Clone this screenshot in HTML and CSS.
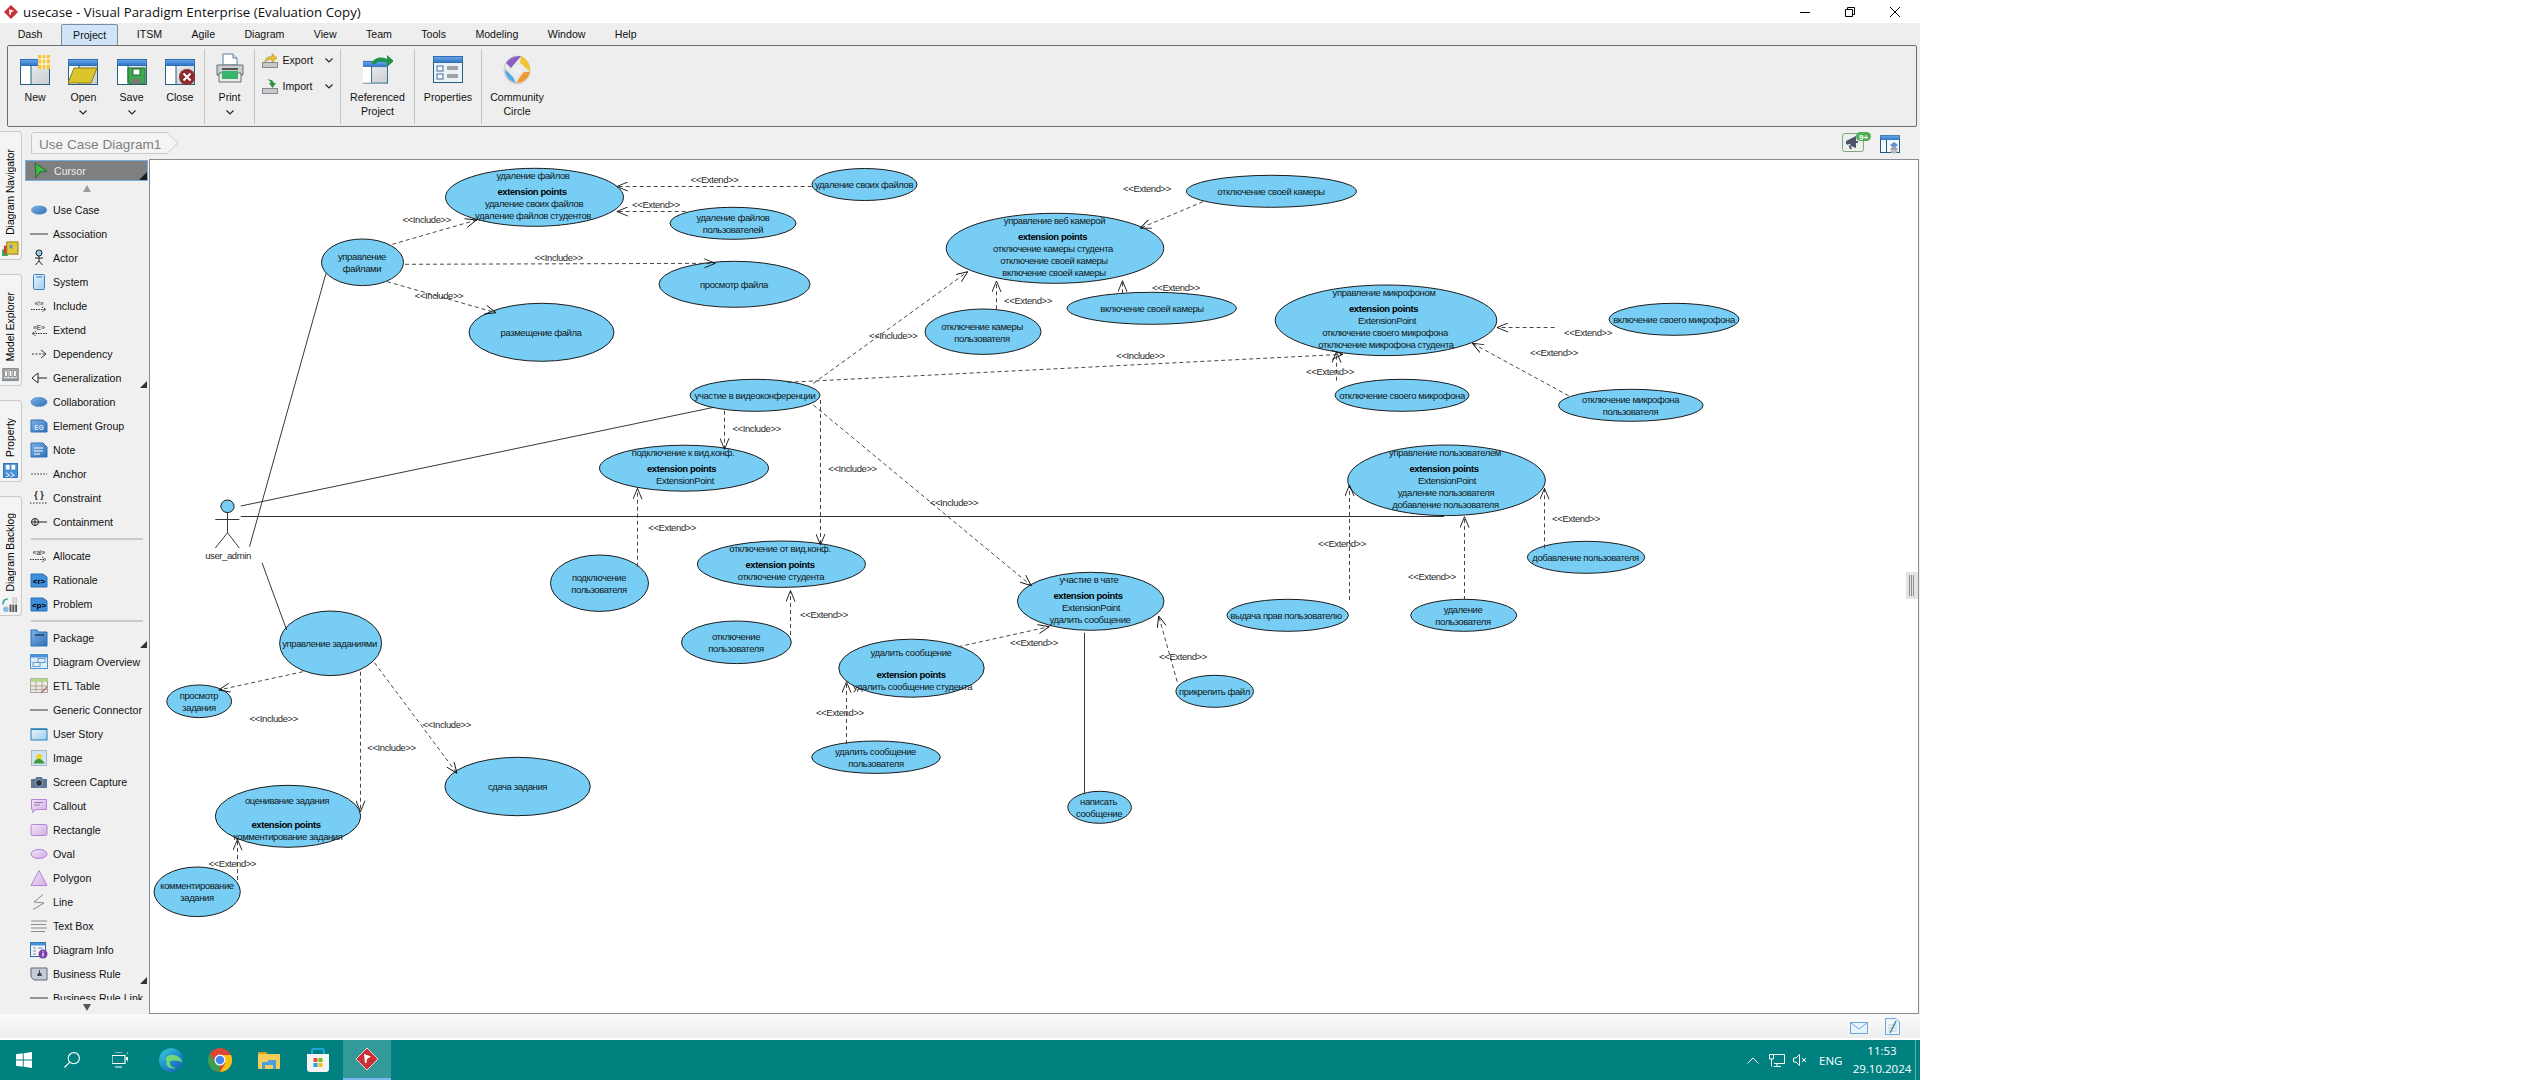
FILE: index.html
```html
<!DOCTYPE html>
<html lang="en">
<head>
<meta charset="utf-8">
<title>usecase - Visual Paradigm Enterprise (Evaluation Copy)</title>
<link rel="stylesheet" href="styles.css">
</head>
<body>
<svg class="defs" width="0" height="0" aria-hidden="true">
  <defs>
    <linearGradient id="gh" x1="0" y1="0" x2="0" y2="1"><stop offset="0" stop-color="#6aa8ea"/><stop offset="1" stop-color="#2f74c6"/></linearGradient>
    <linearGradient id="gp" x1="0" y1="0" x2="1" y2="1"><stop offset="0" stop-color="#f4f4f4"/><stop offset="1" stop-color="#c9cdd0"/></linearGradient>
    <linearGradient id="gb" x1="0" y1="0" x2="1" y2="1"><stop offset="0" stop-color="#7db3e6"/><stop offset="1" stop-color="#2f6fb7"/></linearGradient>
    <linearGradient id="gl" x1="0" y1="0" x2="1" y2="1"><stop offset="0" stop-color="#f0e4f8"/><stop offset="1" stop-color="#d3aee6"/></linearGradient>
    <linearGradient id="ge" x1="0" y1="0" x2="1" y2="1"><stop offset="0" stop-color="#37c9c0"/><stop offset="0.5" stop-color="#1f8fd0"/><stop offset="1" stop-color="#0f5ca8"/></linearGradient>
    <linearGradient id="gs" x1="0" y1="0" x2="1" y2="1"><stop offset="0" stop-color="#e6f4fb"/><stop offset="1" stop-color="#9fd0ec"/></linearGradient>
    <symbol id="win" viewBox="0 0 30 30">
      <rect x="0.5" y="4.5" width="29" height="25" fill="url(#gp)" stroke="#23607f"/>
      <rect x="0.5" y="4.5" width="29" height="6" rx="1" fill="url(#gh)" stroke="#2f6fb7"/>
      <rect x="1" y="11" width="10" height="18" fill="#fff"/>
      <line x1="11" y1="10" x2="11" y2="29" stroke="#23607f"/>
    </symbol>
    <symbol id="chev" viewBox="0 0 8 5"><polyline points="0.5,0.5 4,4 7.5,0.5" fill="none" stroke="#222" stroke-width="1.1"/></symbol>
    <marker id="a" viewBox="0 0 12 10" refX="11.5" refY="5" markerWidth="12" markerHeight="10" markerUnits="userSpaceOnUse" orient="auto"><polyline points="0.5,0.5 11.5,5 0.5,9.5" fill="none" stroke="#111" stroke-width="0.9"/></marker>
  </defs>
</svg>

<div class="app">
  <header class="titlebar">
    <svg class="appicon" viewBox="0 0 14 14"><path d="M7 0 14 7 7 14 0 7Z" fill="#c9303a"/><path d="M5 4.2 10 5.8 7 7.5 6.8 10H5.6Z" fill="#fff"/></svg>
    <span class="apptitle">usecase - Visual Paradigm Enterprise (Evaluation Copy)</span>
    <div class="winctl">
      <svg viewBox="0 0 10 10"><line x1="0" y1="5.5" x2="10" y2="5.5" stroke="#000"/></svg>
      <svg viewBox="0 0 10 10"><path d="M2.5 2.5V.5h7v7h-2M.5 2.5h7v7h-7Z" fill="none" stroke="#000"/></svg>
      <svg viewBox="0 0 10 10"><path d="M0 0 10 10M10 0 0 10" stroke="#000"/></svg>
    </div>
  </header>

  <nav class="menubar">
    <span class="menu">Dash</span><span class="menu menu-on">Project</span><span class="menu">ITSM</span><span class="menu">Agile</span><span class="menu">Diagram</span><span class="menu">View</span><span class="menu">Team</span><span class="menu">Tools</span><span class="menu">Modeling</span><span class="menu">Window</span><span class="menu">Help</span>
  </nav>

  <div class="ribbonwrap">
    <div class="ribbon">
      <div class="rgroup g1">
        <div class="rbtn">
          <svg class="ricon" viewBox="0 0 30 30"><use href="#win" width="30" height="30"/><rect x="18" y="0" width="12" height="14" fill="#f5c542"/><path d="M22 0v14M26 0v14M18 4h12M18 9h12" stroke="#fff" stroke-width="1"/></svg>
          <span class="rlabel">New</span>
        </div>
        <div class="rbtn">
          <svg class="ricon" viewBox="0 0 30 30"><use href="#win" width="30" height="30"/><path d="M6 13H29L23 28H0Z" fill="#dcc52c" stroke="#8a7a12"/></svg>
          <span class="rlabel">Open</span><svg class="chev chev-b"><use href="#chev"/></svg>
        </div>
        <div class="rbtn">
          <svg class="ricon" viewBox="0 0 30 30"><use href="#win" width="30" height="30"/><path d="M11 13H28V29H13L11 27Z" fill="#3ea84f" stroke="#1f6e30"/><rect x="16" y="14" width="7" height="6" fill="#fff" stroke="#1f6e30"/><rect x="15" y="24" width="9" height="5" fill="#777"/></svg>
          <span class="rlabel">Save</span><svg class="chev chev-b"><use href="#chev"/></svg>
        </div>
        <div class="rbtn">
          <svg class="ricon" viewBox="0 0 30 30"><use href="#win" width="30" height="30"/><circle cx="22" cy="22" r="8" fill="#8f2a2f"/><path d="M18.5 18.5 25.5 25.5M25.5 18.5 18.5 25.5" stroke="#fff" stroke-width="2"/></svg>
          <span class="rlabel">Close</span>
        </div>
      </div>
      <div class="rgroup g2">
        <div class="rbtn">
          <svg class="ricon ricon-print" viewBox="0 0 30 30"><path d="M8 1H18L22 5V12H8Z" fill="#fff" stroke="#5a7fa8"/><path d="M18 1V5H22" fill="#d7e6f5" stroke="#5a7fa8"/><path d="M2 12H28V22H2Z" fill="#c9ccd0" stroke="#6a6f76"/><path d="M4 20H26V29H4Z" fill="#e8e8e8" stroke="#6a6f76"/><rect x="7" y="18" width="16" height="8" fill="#38b46a"/><rect x="7" y="15" width="16" height="2" fill="#555"/></svg>
          <span class="rlabel">Print</span><svg class="chev chev-b"><use href="#chev"/></svg>
        </div>
      </div>
      <div class="rgroup g3">
        <div class="rrow">
          <svg class="smicon" viewBox="0 0 17 15"><rect x="0.5" y="9.5" width="15" height="5" fill="#c6c8cb" stroke="#85888c"/><path d="M3 9C3 5 6 3.5 10 3.5V0.5L15 5 10 9.5V6.5C7 6.5 5 7 3 9Z" fill="#e8bf3a" stroke="#a38112" stroke-width=".5"/></svg>
          <span class="rowtext">Export</span><svg class="chev"><use href="#chev"/></svg>
        </div>
        <div class="rrow">
          <svg class="smicon" viewBox="0 0 17 15"><rect x="0.5" y="9.5" width="15" height="5" fill="#c6c8cb" stroke="#85888c"/><path d="M3 0.5C7 0.5 9 2 9 6V4H7L10.5 9 14 4H11.5C11.5 1 8 0 3 0.5Z" fill="#2c8f3c"/></svg>
          <span class="rowtext">Import</span><svg class="chev"><use href="#chev"/></svg>
        </div>
      </div>
      <div class="rgroup g4">
        <div class="rbtn">
          <svg class="ricon" viewBox="0 0 30 30"><use href="#win" x="-1" y="1" width="26" height="29"/><path d="M9 9C10 3 17 1 24 4V0L31 6 24 12V8C18 5 14 6 13 9Z" fill="#1f9447"/></svg>
          <span class="rlabel">Referenced</span><span class="rlabel">Project</span>
        </div>
      </div>
      <div class="rgroup g5">
        <div class="rbtn">
          <svg class="ricon" viewBox="0 0 30 30"><rect x="0.5" y="1.5" width="29" height="26" fill="#eef1f4" stroke="#23607f"/><rect x="0.5" y="1.5" width="29" height="6" rx="1" fill="url(#gh)" stroke="#2f6fb7"/><rect x="4" y="11" width="6" height="5" fill="#fff" stroke="#3d6f9e"/><rect x="4" y="19" width="6" height="5" fill="#fff" stroke="#3d6f9e"/><rect x="14" y="11" width="11" height="4" fill="#9ca3ab"/><rect x="14" y="19" width="11" height="4" fill="#9ca3ab"/></svg>
          <span class="rlabel">Properties</span>
        </div>
      </div>
      <div class="rgroup g6">
        <div class="rbtn">
          <svg class="ricon" viewBox="0 0 30 30"><ellipse cx="15" cy="15" rx="13" ry="14" fill="#e9e9ea" stroke="#c9c9cc"/><path d="M4 8C8 2 14 1 19 1 16 5 12 9 9 13Z" fill="#8a5fc4"/><path d="M19 1C25 4 29 10 28 17 25 14 21 10 18 8Z" fill="#f0c52e"/><path d="M28 17C26 24 21 28 14 28 16 25 19 20 22 17Z" fill="#ee9a33"/><path d="M14 28C8 27 3 22 3 14 6 17 9 20 11 22Z" fill="#55a8e6"/><circle cx="15" cy="15" r="4.5" fill="#eef0f2"/></svg>
          <span class="rlabel">Community</span><span class="rlabel">Circle</span>
        </div>
      </div>
    </div>
  </div>

  <main class="work">
    <aside class="sidetabs">
      <div class="stab stab1"><svg class="stabicon" viewBox="0 0 18 16"><rect x="0" y="9" width="6" height="7" fill="#3aa655"/><rect x="2" y="5" width="6" height="8" fill="#d23c3c"/><rect x="5" y="1" width="12" height="13" fill="#e3c63a" stroke="#8a7a12"/><rect x="8" y="4" width="3" height="4" fill="#5a8fd0"/></svg><span class="stabtext">Diagram Navigator</span></div>
      <div class="stab stab2"><svg class="stabicon" viewBox="0 0 18 14"><rect x="1" y="1" width="16" height="11" fill="#cdd3da" stroke="#555"/><rect x="3" y="3" width="3" height="6" fill="#fff" stroke="#555" stroke-width=".6"/><rect x="7.5" y="3" width="3" height="6" fill="#fff" stroke="#555" stroke-width=".6"/><rect x="12" y="3" width="3" height="6" fill="#fff" stroke="#555" stroke-width=".6"/><rect x="0" y="12" width="18" height="2" fill="#8a8f96"/></svg><span class="stabtext">Model Explorer</span></div>
      <div class="stab stab3"><svg class="stabicon" viewBox="0 0 16 16"><rect x="0.5" y="0.5" width="15" height="15" fill="#4a90d9" stroke="#2f6fb7"/><rect x="3" y="2" width="4" height="5" fill="#fff"/><rect x="9" y="2" width="4" height="5" fill="#fff"/><path d="M3 10 7 13 3 15M8 10 12 13 8 15" stroke="#fff" fill="none"/></svg><span class="stabtext">Property</span></div>
      <div class="stab stab4"><svg class="stabicon" viewBox="0 0 18 16"><circle cx="4" cy="13" r="3" fill="#8bb9e6"/><path d="M1 8C1 4 3 2 6 2" stroke="#2aa39a" stroke-width="1.6" fill="none"/><rect x="8" y="8" width="2" height="8" fill="#555"/><rect x="11" y="8" width="2" height="8" fill="#555"/><rect x="14" y="8" width="2" height="8" fill="#555"/><rect x="11" y="0" width="2" height="7" fill="#ccc"/><rect x="14" y="0" width="2" height="7" fill="#ccc"/></svg><span class="stabtext">Diagram Backlog</span></div>
    </aside>

    <div class="crumbbar">
      <div class="crumb">
        <svg class="crumbshape" viewBox="0 0 148 22" preserveAspectRatio="none"><path d="M2.5 .5H136L147 11 136 21.5H.5V2.5Z" fill="#f4f4f4" stroke="#c9c9c9"/></svg>
        <span class="crumbtext">Use Case Diagram1</span>
      </div>
      <div class="crumbtools">
        <svg class="announce" viewBox="0 0 29 20"><rect x="0.5" y="1.5" width="21" height="18" rx="2" fill="#eef0ee" stroke="#7fa87f"/><path d="M4 9 14 4V16L4 12ZM6 12 8 17H10L8 12ZM14 9H16V11H14Z" fill="#4a5568"/><rect x="14" y="0" width="15" height="9" rx="4.5" fill="#4fae55"/><text class="badge" x="21.5" y="7.5">9+</text></svg>
        <svg class="layouticon" viewBox="0 0 20 19"><rect x="0.5" y="0.5" width="19" height="17" fill="#f4f6f8" stroke="#23607f"/><rect x="0.5" y="0.5" width="19" height="4.5" fill="url(#gh)"/><line x1="6.5" y1="5" x2="6.5" y2="18" stroke="#23607f"/><path d="M14 7 18 10 14 13 10 10Z" fill="#5b8fd6"/><path d="M14 11 18 14 14 17 10 14Z" fill="#9a9fa6"/><path d="M14 14 18 16.5 14 19 10 16.5Z" fill="#b9bdc2"/></svg>
      </div>
    </div>

    <aside class="palette">
      <div class="cursorrow">
        <svg class="ti" viewBox="0 0 18 18"><path d="M4 1 16 9 9 10 5 16Z" fill="#43b649" stroke="#1f6e30"/></svg>
        <span>Cursor</span>
      </div>
      <div class="arrowrow"><span class="arrow-up"></span></div>
      <ul class="tools">
        <li class="tool"><svg class="ti" viewBox="0 0 18 18"><ellipse cx="9" cy="9" rx="8" ry="4.5" fill="url(#gb)"/></svg><span>Use Case</span></li>
        <li class="tool"><svg class="ti" viewBox="0 0 18 18"><line x1="0" y1="9" x2="18" y2="9" stroke="#777" stroke-width="1.5"/></svg><span>Association</span></li>
        <li class="tool"><svg class="ti" viewBox="0 0 18 18"><circle cx="9" cy="4" r="3" fill="#8fcdf0" stroke="#222"/><path d="M9 7V12M5 9H13M9 12 5.5 16M9 12 12.5 16" stroke="#222" fill="none"/></svg><span>Actor</span></li>
        <li class="tool"><svg class="ti" viewBox="0 0 18 18"><rect x="3.5" y="1.5" width="11" height="15" rx="1" fill="url(#gs)" stroke="#3b7fbf"/><line x1="6" y1="4" x2="12" y2="4" stroke="#3b7fbf"/></svg><span>System</span></li>
        <li class="tool"><svg class="ti" viewBox="0 0 18 18"><text class="gt" x="9" y="9">«!»</text><path d="M1 12.5H15M12 10 16 12.5 12 15" stroke="#333" stroke-dasharray="1.5 1" fill="none"/></svg><span>Include</span></li>
        <li class="tool"><svg class="ti" viewBox="0 0 18 18"><text class="gt" x="9" y="9">«E»</text><path d="M17 12.5H2M6 10 2 12.5 6 15" stroke="#333" stroke-dasharray="1.5 1" fill="none"/></svg><span>Extend</span></li>
        <li class="tool"><svg class="ti" viewBox="0 0 18 18"><path d="M2 9H15" stroke="#333" stroke-dasharray="2 1.5"/><path d="M11 5 16 9 11 13" stroke="#333" fill="none"/></svg><span>Dependency</span></li>
        <li class="tool more"><svg class="ti" viewBox="0 0 18 18"><path d="M8 4 2 9 8 14ZM8 9H17" stroke="#222" fill="#fff"/></svg><span>Generalization</span></li>
        <li class="tool"><svg class="ti" viewBox="0 0 18 18"><ellipse cx="9" cy="9" rx="8" ry="4.5" fill="url(#gb)" stroke="#3a7fc4" stroke-dasharray="1.5 1"/></svg><span>Collaboration</span></li>
        <li class="tool"><svg class="ti" viewBox="0 0 18 18"><path d="M1 3H13L17 6V15H1Z" fill="url(#gb)" stroke="#2f6fb7"/><text class="gw" x="9" y="12.5">EG</text></svg><span>Element Group</span></li>
        <li class="tool"><svg class="ti" viewBox="0 0 18 18"><path d="M1 2H13L17 6V16H1Z" fill="url(#gb)" stroke="#2f6fb7"/><path d="M4 7H13M4 10H13M4 13H10" stroke="#fff"/></svg><span>Note</span></li>
        <li class="tool"><svg class="ti" viewBox="0 0 18 18"><line x1="1" y1="9" x2="17" y2="9" stroke="#555" stroke-dasharray="2 1"/></svg><span>Anchor</span></li>
        <li class="tool"><svg class="ti" viewBox="0 0 18 18"><text class="gc" x="9" y="9">{ }</text><line x1="0" y1="14" x2="18" y2="14" stroke="#333" stroke-dasharray="1.5 1.5"/></svg><span>Constraint</span></li>
        <li class="tool"><svg class="ti" viewBox="0 0 18 18"><circle cx="5" cy="9" r="3.5" fill="none" stroke="#222"/><path d="M1.5 9H17M5 5.5V12.5" stroke="#222"/></svg><span>Containment</span></li>
        <li class="palsep"></li>
        <li class="tool"><svg class="ti" viewBox="0 0 18 18"><text class="gt" x="9" y="8">«al»</text><path d="M0 12.5H15M12 10 16 12.5 12 15" stroke="#333" stroke-dasharray="1.5 1" fill="none"/></svg><span>Allocate</span></li>
        <li class="tool"><svg class="ti" viewBox="0 0 18 18"><path d="M1 3H13L17 6V16H1Z" fill="#3d8fdc" stroke="#2f6fb7"/><text class="gw gk" x="9" y="12.5">&lt;r&gt;</text></svg><span>Rationale</span></li>
        <li class="tool"><svg class="ti" viewBox="0 0 18 18"><path d="M1 3H13L17 6V16H1Z" fill="#3d8fdc" stroke="#2f6fb7"/><text class="gw gk" x="9" y="12.5">&lt;p&gt;</text></svg><span>Problem</span></li>
        <li class="palsep"></li>
        <li class="tool more"><svg class="ti" viewBox="0 0 18 18"><path d="M1 1H7L8 3H17V17H1Z" fill="url(#gb)" stroke="#2f6fb7"/><line x1="5" y1="6" x2="14" y2="6" stroke="#1d3d5c" stroke-width="1.5"/></svg><span>Package</span></li>
        <li class="tool"><svg class="ti" viewBox="0 0 18 18"><rect x="0.5" y="1.5" width="17" height="14" fill="#dcecf9" stroke="#4a90d9"/><rect x="0.5" y="1.5" width="17" height="3" fill="#4a90d9"/><rect x="8" y="5.5" width="7" height="4" fill="none" stroke="#6a9cc9"/><rect x="3" y="9.5" width="7" height="4" fill="none" stroke="#6a9cc9"/></svg><span>Diagram Overview</span></li>
        <li class="tool"><svg class="ti" viewBox="0 0 18 18"><rect x="0.5" y="1.5" width="17" height="14" fill="#eceae4" stroke="#a8a89c"/><rect x="0.5" y="1.5" width="17" height="3.5" fill="#b6d68f"/><path d="M0 9H18M0 12.5H18M6 5V16M12 5V16" stroke="#a8a89c"/><path d="M11 16 17 10" stroke="#c95d7d" stroke-width="1.2"/></svg><span>ETL Table</span></li>
        <li class="tool"><svg class="ti" viewBox="0 0 18 18"><line x1="0" y1="9" x2="18" y2="9" stroke="#777" stroke-width="1.5"/></svg><span>Generic Connector</span></li>
        <li class="tool"><svg class="ti" viewBox="0 0 18 18"><rect x="1" y="4" width="16" height="11" fill="url(#gs)" stroke="#2b7fb5"/><rect x="1" y="3.5" width="16" height="1.5" fill="#2b7fb5"/></svg><span>User Story</span></li>
        <li class="tool"><svg class="ti" viewBox="0 0 18 18"><rect x="1.5" y="1.5" width="15" height="15" fill="#cfe3f4" stroke="#a5b9c9"/><circle cx="9" cy="8" r="3" fill="#f2d22e"/><path d="M3.5 14.5C5 10 8 9 10 10 12 11 14 12 14.5 14.5Z" fill="#3d9a3a"/></svg><span>Image</span></li>
        <li class="tool"><svg class="ti" viewBox="0 0 18 18"><path d="M1 6H5L6.5 4H11.5L13 6H17V15H1Z" fill="#5d7897"/><circle cx="9" cy="10" r="3.5" fill="#2c3642" stroke="#9aa8b6"/></svg><span>Screen Capture</span></li>
        <li class="tool"><svg class="ti" viewBox="0 0 18 18"><path d="M1.5 2.5H16.5V12.5H6L2.5 15.5 3.5 12.5H1.5Z" fill="url(#gl)" stroke="#b585d4"/><path d="M4 5.5H13M4 8H10" stroke="#9a7bb0"/></svg><span>Callout</span></li>
        <li class="tool"><svg class="ti" viewBox="0 0 18 18"><rect x="1" y="3.5" width="16" height="11" rx="1.5" fill="url(#gl)" stroke="#b585d4"/></svg><span>Rectangle</span></li>
        <li class="tool"><svg class="ti" viewBox="0 0 18 18"><ellipse cx="9" cy="9" rx="8" ry="4.5" fill="url(#gl)" stroke="#b585d4"/></svg><span>Oval</span></li>
        <li class="tool"><svg class="ti" viewBox="0 0 18 18"><path d="M9 1.5 17 16.5H1Z" fill="url(#gl)" stroke="#b585d4"/></svg><span>Polygon</span></li>
        <li class="tool"><svg class="ti" viewBox="0 0 18 18"><path d="M13 1.5 4 9 14 10 3 16.5" fill="none" stroke="#8a8a8a"/></svg><span>Line</span></li>
        <li class="tool"><svg class="ti" viewBox="0 0 18 18"><path d="M1 4H17M1 7.5H16M1 11H17M1 14.5H15" stroke="#8a8a8a"/></svg><span>Text Box</span></li>
        <li class="tool"><svg class="ti" viewBox="0 0 18 18"><rect x="0.5" y="1.5" width="15" height="14" fill="#f4f6f8" stroke="#2b6f9f"/><rect x="0.5" y="1.5" width="15" height="3" fill="#4a90d9"/><path d="M3 7H6M3 10H6M3 13H6M8 7H13" stroke="#889"/><circle cx="13" cy="13" r="4.5" fill="#7d3fa8"/><rect x="12.4" y="12" width="1.2" height="3.5" fill="#fff"/><rect x="12.4" y="10.3" width="1.2" height="1.1" fill="#fff"/></svg><span>Diagram Info</span></li>
        <li class="tool more"><svg class="ti" viewBox="0 0 18 18"><path d="M1 3H17V15H4L1 12Z" fill="#c5ccd4" stroke="#5a6a7a"/><path d="M7 11H12L11 8H8ZM9 5H10V8H9Z" fill="#3a4654"/></svg><span>Business Rule</span></li>
        <li class="tool"><svg class="ti" viewBox="0 0 18 18"><line x1="0" y1="9" x2="18" y2="9" stroke="#555" stroke-width="1.2"/></svg><span>Business Rule Link</span></li>
      </ul>
      <div class="arrowdown"><span class="arrow-down"></span></div>
    </aside>

    <section class="canvas">
      <svg class="diagram" viewBox="150 160 1768 853">
        <!-- use cases -->
        <ellipse class="uc" cx="534.5" cy="197.3" rx="89" ry="29"/>
        <ellipse class="uc" cx="864.5" cy="184.5" rx="52.5" ry="16"/>
        <ellipse class="uc" cx="733" cy="223.3" rx="63" ry="16"/>
        <ellipse class="uc" cx="362.5" cy="262.3" rx="41" ry="23.3"/>
        <ellipse class="uc" cx="734.5" cy="284.3" rx="75.5" ry="23"/>
        <ellipse class="uc" cx="541.5" cy="332.3" rx="72.5" ry="29"/>
        <ellipse class="uc" cx="755" cy="395.3" rx="65" ry="16"/>
        <ellipse class="uc" cx="684" cy="468.2" rx="84.5" ry="23"/>
        <ellipse class="uc" cx="1271.4" cy="191.3" rx="85" ry="16"/>
        <ellipse class="uc" cx="1055" cy="248.3" rx="108.8" ry="35"/>
        <ellipse class="uc" cx="1151.7" cy="308.3" rx="84.6" ry="16"/>
        <ellipse class="uc" cx="983" cy="331.7" rx="58" ry="22.7"/>
        <ellipse class="uc" cx="1386" cy="320.3" rx="110.8" ry="35.3"/>
        <ellipse class="uc" cx="1674" cy="319.3" rx="65" ry="16"/>
        <ellipse class="uc" cx="1402" cy="395.3" rx="67" ry="16"/>
        <ellipse class="uc" cx="1630.8" cy="405.3" rx="72.3" ry="16"/>
        <ellipse class="uc" cx="1446.5" cy="480.3" rx="98.8" ry="35.3"/>
        <ellipse class="uc" cx="1090.7" cy="601.3" rx="73.3" ry="29"/>
        <ellipse class="uc" cx="1287.7" cy="615.3" rx="60.7" ry="16"/>
        <ellipse class="uc" cx="1463.7" cy="615.3" rx="53" ry="16"/>
        <ellipse class="uc" cx="1586" cy="557.3" rx="58.7" ry="16"/>
        <ellipse class="uc" cx="1214.7" cy="691.3" rx="38.8" ry="16"/>
        <ellipse class="uc" cx="1099.6" cy="807.3" rx="31.8" ry="16"/>
        <ellipse class="uc" cx="911.5" cy="668.2" rx="72.7" ry="29"/>
        <ellipse class="uc" cx="781.4" cy="564.2" rx="84" ry="23.2"/>
        <ellipse class="uc" cx="599.5" cy="583.2" rx="49" ry="28.2"/>
        <ellipse class="uc" cx="736.4" cy="642.3" rx="54.9" ry="21.3"/>
        <ellipse class="uc" cx="330.6" cy="643.3" rx="51" ry="32.3"/>
        <ellipse class="uc" cx="199.2" cy="701.3" rx="32.4" ry="16.3"/>
        <ellipse class="uc" cx="517.6" cy="786.5" rx="72.7" ry="29.2"/>
        <ellipse class="uc" cx="288" cy="816.3" rx="72.7" ry="31"/>
        <ellipse class="uc" cx="197.2" cy="891.8" rx="43.1" ry="24.8"/>
        <ellipse class="uc" cx="876" cy="757.2" rx="64.3" ry="16.2"/>

        <!-- actor -->
        <ellipse class="uc" cx="227.5" cy="506.3" rx="6.6" ry="6.3"/>
        <path class="solid" d="M227.5 512.7V532.7M215.3 519.5H239.3M227.5 532.7 215.3 548M227.5 532.7 239.3 548"/>
        <text class="lbl" x="228" y="559">user_admin</text>

        <!-- associations -->
        <line class="solid" x1="249.5" y1="546.7" x2="326" y2="273.3"/>
        <line class="solid" x1="240.8" y1="506" x2="713.8" y2="407.3"/>
        <line class="solid dark" x1="240.8" y1="516.5" x2="1444" y2="516.5"/>
        <line class="solid" x1="262" y1="562.7" x2="286.7" y2="630"/>
        <line class="solid" x1="1084.5" y1="632.7" x2="1084.5" y2="793.3"/>

        <!-- dependencies -->
        <line class="dep" x1="392.3" y1="244.3" x2="476.5" y2="220" marker-end="url(#a)"/>
        <line class="dep" x1="811.7" y1="186.5" x2="616.8" y2="186.5" marker-end="url(#a)"/>
        <line class="dep" x1="685.7" y1="211.5" x2="616.8" y2="211.5" marker-end="url(#a)"/>
        <line class="dep" x1="405" y1="264.3" x2="715.3" y2="263.3" marker-end="url(#a)"/>
        <line class="dep" x1="387.2" y1="281.7" x2="496" y2="312.7" marker-end="url(#a)"/>
        <line class="dep" x1="724.5" y1="410.7" x2="724.5" y2="449.3" marker-end="url(#a)"/>
        <line class="dep" x1="820.5" y1="400" x2="820.5" y2="545" marker-end="url(#a)"/>
        <line class="dep" x1="813.3" y1="405" x2="1031.3" y2="585.7" marker-end="url(#a)"/>
        <line class="dep" x1="813.3" y1="383.3" x2="967.7" y2="271.7" marker-end="url(#a)"/>
        <line class="dep" x1="787.8" y1="382.3" x2="1343" y2="354.3" marker-end="url(#a)"/>
        <line class="dep" x1="637.5" y1="566.7" x2="637.5" y2="488.3" marker-end="url(#a)"/>
        <line class="dep" x1="1203" y1="201.7" x2="1140" y2="228.3" marker-end="url(#a)"/>
        <line class="dep" x1="1122.5" y1="293.3" x2="1122.5" y2="280.7" marker-end="url(#a)"/>
        <line class="dep" x1="996.5" y1="309.3" x2="996.5" y2="281" marker-end="url(#a)"/>
        <line class="dep" x1="1554.6" y1="327.5" x2="1497" y2="327.5" marker-end="url(#a)"/>
        <line class="dep" x1="1568.6" y1="395.7" x2="1472.4" y2="343.3" marker-end="url(#a)"/>
        <line class="dep" x1="1336.5" y1="380.7" x2="1336.5" y2="351.7" marker-end="url(#a)"/>
        <line class="dep" x1="303" y1="671.7" x2="218.9" y2="690" marker-end="url(#a)"/>
        <line class="dep" x1="360.5" y1="671.7" x2="360.5" y2="811.7" marker-end="url(#a)"/>
        <line class="dep" x1="374.5" y1="662.7" x2="457" y2="773.3" marker-end="url(#a)"/>
        <line class="dep" x1="237.5" y1="880" x2="237.5" y2="839.3" marker-end="url(#a)"/>
        <line class="dep" x1="846.5" y1="744" x2="846.5" y2="681.7" marker-end="url(#a)"/>
        <line class="dep" x1="790.5" y1="635" x2="790.5" y2="590.7" marker-end="url(#a)"/>
        <line class="dep" x1="958.4" y1="646.7" x2="1049.2" y2="626.7" marker-end="url(#a)"/>
        <line class="dep" x1="1177.2" y1="681.7" x2="1158.7" y2="616" marker-end="url(#a)"/>
        <line class="dep" x1="1349.5" y1="600" x2="1349.5" y2="485" marker-end="url(#a)"/>
        <line class="dep" x1="1464.5" y1="600" x2="1464.5" y2="516.7" marker-end="url(#a)"/>
        <line class="dep" x1="1544.5" y1="548.3" x2="1544.5" y2="488.3" marker-end="url(#a)"/>

        <!-- use case text -->
        <text class="t" x="533" y="179">удаление файлов</text>
        <text class="t b" x="532" y="195.3">extension points</text>
        <text class="t" x="534" y="207">удаление своих файлов</text>
        <text class="t" x="533" y="219">удаление файлов студентов</text>
        <text class="t" x="864" y="188">удаление своих файлов</text>
        <text class="t" x="733" y="221.3">удаление файлов</text>
        <text class="t" x="733" y="233.3">пользователей</text>
        <text class="t" x="362" y="260.3">управление</text>
        <text class="t" x="362" y="272.3">файлами</text>
        <text class="t" x="734" y="288">просмотр файла</text>
        <text class="t" x="541" y="336">размещение файла</text>
        <text class="t" x="755" y="399">участие в видеоконференции</text>
        <text class="t" x="683" y="456">подключение к вид.конф.</text>
        <text class="t b" x="681.5" y="472">extension points</text>
        <text class="t" x="685" y="484">ExtensionPoint</text>
        <text class="t" x="1271" y="195.3">отключение своей камеры</text>
        <text class="t" x="1054.5" y="224.3">управление веб камерой</text>
        <text class="t b" x="1052.5" y="240.3">extension points</text>
        <text class="t" x="1053" y="252.3">отключение камеры студента</text>
        <text class="t" x="1054" y="264.3">отключение своей камеры</text>
        <text class="t" x="1054" y="276.3">включение своей камеры</text>
        <text class="t" x="1152" y="312.3">включение своей камеры</text>
        <text class="t" x="982" y="330.3">отключение камеры</text>
        <text class="t" x="982" y="342.3">пользователя</text>
        <text class="t" x="1384" y="296.3">управление микрофоном</text>
        <text class="t b" x="1383.5" y="312.3">extension points</text>
        <text class="t" x="1387" y="324">ExtensionPoint</text>
        <text class="t" x="1385" y="336.3">отключение своего микрофона</text>
        <text class="t" x="1386" y="348.3">отключение микрофона студента</text>
        <text class="t" x="1674" y="323">включение своего микрофона</text>
        <text class="t" x="1402" y="399">отключение своего микрофона</text>
        <text class="t" x="1630.5" y="403">отключение микрофона</text>
        <text class="t" x="1630.5" y="415.3">пользователя</text>
        <text class="t" x="1445" y="456.3">управление пользователем</text>
        <text class="t b" x="1444" y="472.3">extension points</text>
        <text class="t" x="1447" y="484">ExtensionPoint</text>
        <text class="t" x="1446" y="496.3">удаление пользователя</text>
        <text class="t" x="1445.5" y="508.3">добавление пользователя</text>
        <text class="t" x="1089" y="583">участие в чате</text>
        <text class="t b" x="1088" y="599.3">extension points</text>
        <text class="t" x="1091" y="611">ExtensionPoint</text>
        <text class="t" x="1090" y="623">удалить сообщение</text>
        <text class="t" x="1286" y="619">выдача прав пользователю</text>
        <text class="t" x="1463" y="613.3">удаление</text>
        <text class="t" x="1463" y="625.3">пользователя</text>
        <text class="t" x="1585.5" y="561">добавление пользователя</text>
        <text class="t" x="1214.5" y="695">прикрепить файл</text>
        <text class="t" x="1098.5" y="805.3">написать</text>
        <text class="t" x="1099" y="817.3">сообщение</text>
        <text class="t" x="911" y="656.3">удалить сообщение</text>
        <text class="t b" x="911" y="678">extension points</text>
        <text class="t" x="912.5" y="690">удалить сообщение студента</text>
        <text class="t" x="780" y="552">отключение от вид.конф.</text>
        <text class="t b" x="780" y="568.3">extension points</text>
        <text class="t" x="781" y="580.3">отключение студента</text>
        <text class="t" x="599" y="581.3">подключение</text>
        <text class="t" x="599" y="593.3">пользователя</text>
        <text class="t" x="736" y="640.3">отключение</text>
        <text class="t" x="736" y="652.3">пользователя</text>
        <text class="t" x="329.5" y="647.3">управление заданиями</text>
        <text class="t" x="199" y="699">просмотр</text>
        <text class="t" x="199" y="711.3">задания</text>
        <text class="t" x="517.5" y="790">сдача задания</text>
        <text class="t" x="287" y="804.3">оценивание задания</text>
        <text class="t b" x="286" y="828.3">extension points</text>
        <text class="t" x="288" y="840.3">комментирование задания</text>
        <text class="t" x="197" y="889.3">комментирование</text>
        <text class="t" x="197" y="901.3">задания</text>
        <text class="t" x="875.5" y="755.3">удалить сообщение</text>
        <text class="t" x="876" y="767.3">пользователя</text>

        <!-- stereotypes -->
        <text class="lbl" x="426.7" y="223">&lt;&lt;Include&gt;&gt;</text>
        <text class="lbl" x="714.5" y="182.7">&lt;&lt;Extend&gt;&gt;</text>
        <text class="lbl" x="656" y="208">&lt;&lt;Extend&gt;&gt;</text>
        <text class="lbl" x="558.7" y="260.7">&lt;&lt;Include&gt;&gt;</text>
        <text class="lbl" x="439" y="299">&lt;&lt;Include&gt;&gt;</text>
        <text class="lbl" x="756.6" y="431.7">&lt;&lt;Include&gt;&gt;</text>
        <text class="lbl" x="852.5" y="471.7">&lt;&lt;Include&gt;&gt;</text>
        <text class="lbl" x="954" y="505.7">&lt;&lt;Include&gt;&gt;</text>
        <text class="lbl" x="893.3" y="338.7">&lt;&lt;Include&gt;&gt;</text>
        <text class="lbl" x="1140.5" y="359">&lt;&lt;Include&gt;&gt;</text>
        <text class="lbl" x="672.2" y="530.7">&lt;&lt;Extend&gt;&gt;</text>
        <text class="lbl" x="1147" y="191.7">&lt;&lt;Extend&gt;&gt;</text>
        <text class="lbl" x="1176" y="290.7">&lt;&lt;Extend&gt;&gt;</text>
        <text class="lbl" x="1028" y="304">&lt;&lt;Extend&gt;&gt;</text>
        <text class="lbl" x="1588" y="335.7">&lt;&lt;Extend&gt;&gt;</text>
        <text class="lbl" x="1554" y="355.7">&lt;&lt;Extend&gt;&gt;</text>
        <text class="lbl" x="1330" y="374.7">&lt;&lt;Extend&gt;&gt;</text>
        <text class="lbl" x="273.7" y="722">&lt;&lt;Include&gt;&gt;</text>
        <text class="lbl" x="391.5" y="750.7">&lt;&lt;Include&gt;&gt;</text>
        <text class="lbl" x="446.7" y="728">&lt;&lt;Include&gt;&gt;</text>
        <text class="lbl" x="232.3" y="866.7">&lt;&lt;Extend&gt;&gt;</text>
        <text class="lbl" x="839.8" y="715.7">&lt;&lt;Extend&gt;&gt;</text>
        <text class="lbl" x="824" y="617.7">&lt;&lt;Extend&gt;&gt;</text>
        <text class="lbl" x="1034" y="645.7">&lt;&lt;Extend&gt;&gt;</text>
        <text class="lbl" x="1183" y="659.7">&lt;&lt;Extend&gt;&gt;</text>
        <text class="lbl" x="1342" y="546.7">&lt;&lt;Extend&gt;&gt;</text>
        <text class="lbl" x="1432" y="579.7">&lt;&lt;Extend&gt;&gt;</text>
        <text class="lbl" x="1576" y="521.7">&lt;&lt;Extend&gt;&gt;</text>
      </svg>
      <div class="sash"></div>
    </section>
  </main>

  <div class="statusbar">
    <svg class="mailicon" viewBox="0 0 18 12"><rect x="0.5" y="0.5" width="17" height="11" fill="#e9f1f9" stroke="#6aa7e0"/><path d="M0.5 0.5 9 7 17.5 0.5" fill="none" stroke="#6aa7e0"/></svg>
    <svg class="docicon" viewBox="0 0 15 17"><path d="M.5.5H11L14.5 4V16.5H.5Z" fill="#f2f5f8" stroke="#6aa7e0"/><path d="M3 7H12M3 10H12M3 13H12" stroke="#bfc4c9"/><path d="M5 15 11 3" stroke="#2f8fa8" stroke-width="1.4"/></svg>
  </div>

  <footer class="taskbar">
    <div class="tbtn"><svg viewBox="0 0 16 16"><path d="M0 2.3 6.8 1.3V7.5H0ZM7.7 1.2 16 0V7.5H7.7ZM0 8.4H6.8V14.7L0 13.7ZM7.7 8.4H16V16L7.7 14.8Z" fill="#fff"/></svg></div>
    <div class="tbtn"><svg viewBox="0 0 16 16"><circle cx="9.8" cy="6.2" r="5.6" fill="none" stroke="#fff" stroke-width="1.1"/><line x1="5.8" y1="10.2" x2="0.5" y2="15.5" stroke="#fff" stroke-width="1.2"/></svg></div>
    <div class="tbtn tbtn-gap"><svg viewBox="0 0 16 16"><path d="M3 0H10M3 15H10M0 3.5H13V11.5H0Z M15 1H16M15 9H16" fill="none" stroke="#fff" stroke-width="1.1"/><rect x="14" y="5" width="2" height="3" fill="#fff"/></svg></div>
    <div class="tbtn tapp"><svg class="t24" viewBox="0 0 24 24"><circle cx="12" cy="12" r="12" fill="url(#ge)"/><path d="M23.5 14C22 9 17 6.5 12 7 7 7.5 6 11 7.5 13 6 18 11 22 17 20 13 20 10 17 11 13.5 14 11.5 19 13 23.5 14Z" fill="#7de06c" opacity=".85"/><path d="M2 9C4 2 13 -1 19 3 13 1 6 4 4 13 3 11 2.5 10 2 9Z" fill="#2fb3d8"/></svg></div>
    <div class="tbtn tapp"><svg class="t24" viewBox="0 0 24 24"><circle cx="12" cy="12" r="12" fill="#db4437"/><path d="M12 7H23A12 12 0 0 1 12 24L17.5 15Z" fill="#f4c20d"/><path d="M12 24A12 12 0 0 1 1.6 18 12 12 0 0 1 2 5.5L8 15 12 16Z" fill="#3c9d4f"/><circle cx="12" cy="12" r="5.5" fill="#fff"/><circle cx="12" cy="12" r="4.3" fill="#4285f4"/></svg></div>
    <div class="tbtn tapp"><svg class="t22" viewBox="0 0 22 18"><path d="M0 2a1 1 0 0 1 1-1H8L10 3H0Z" fill="#d9a129"/><rect x="0" y="3" width="22" height="15" rx="1" fill="#f6cd58"/><path d="M4 18V11H9L11 9H18V18H15V14H7V18Z" fill="#4a9fe0"/></svg></div>
    <div class="tbtn tapp"><svg class="t24" viewBox="0 0 24 24"><path d="M6 6V3a2 2 0 0 1 2-2H16a2 2 0 0 1 2 2V6" fill="none" stroke="#1ea7e1" stroke-width="2"/><path d="M1 6H23V21a3 3 0 0 1-3 3H4a3 3 0 0 1-3-3Z" fill="#f4f4f4"/><rect x="7.5" y="10" width="4" height="4" fill="#e9552f"/><rect x="12.5" y="10" width="4" height="4" fill="#7cb82f"/><rect x="7.5" y="15" width="4" height="4" fill="#1da5e0"/><rect x="12.5" y="15" width="4" height="4" fill="#fbbc09"/></svg></div>
    <div class="tbtn tapp tactive"><svg class="t24" viewBox="0 0 24 24"><path d="M12 1 23 12 12 23 1 12Z" fill="#c9303a" stroke="#e8d8d8"/><path d="M9 7 16 9.5 12 12 11.5 16H10Z" fill="#fff"/></svg></div>
    <div class="tray">
      <svg class="tr-chev" viewBox="0 0 12 7"><polyline points="0.5,6.5 6,1 11.5,6.5" fill="none" stroke="#fff"/></svg>
      <svg class="tr-net" viewBox="0 0 16 13"><path d="M4.5.5H15.5V9.5H5M8 9.5V12.5M4.5 12.5H12M.5.5H4.5V5H.5ZM2.5 5V12.5" fill="none" stroke="#fff"/></svg>
      <svg class="tr-snd" viewBox="0 0 14 12"><path d="M.5 4H3L6.5.5V11.5L3 8H.5Z" fill="none" stroke="#fff"/><path d="M9 4 13 8M13 4 9 8" stroke="#fff"/></svg>
      <span class="tr-lang">ENG</span>
      <div class="clock"><span>11:53</span><span>29.10.2024</span></div>
      <span class="sliver"></span>
    </div>
  </footer>
</div>
</body>
</html>
```

FILE: styles.css
```css
* { box-sizing: border-box; }
html, body { margin: 0; padding: 0; background: #fff; }
body { width: 2540px; height: 1080px; overflow: hidden; font-family: "Liberation Sans", Arial, sans-serif; color: #111; }
.defs { position: absolute; }
svg { display: block; flex: none; }

.app { width: 1920px; height: 1080px; display: flex; flex-direction: column; }

/* title bar */
.titlebar { height: 23px; display: flex; align-items: center; padding-left: 4px; background: #fff; }
.appicon { width: 14px; height: 14px; }
.apptitle { margin-left: 5px; font: 13.3px "Open Sans", sans-serif; color: #111; white-space: nowrap; }
.winctl { margin-left: auto; display: flex; gap: 35px; padding-right: 20px; }
.winctl svg { width: 10px; height: 10px; }

/* menu */
.menubar { height: 22px; display: flex; align-items: flex-end; padding-left: 3px; background: #eeeeee; font-size: 10.6px; }
.menu { height: 21px; line-height: 21px; padding: 0 14.7px; white-space: nowrap; }
.menu-on { padding: 0 11px; margin: 0 4px; background: #cfe4f8; border: 1px solid #7f8c99; border-bottom: 0; border-radius: 2px 2px 0 0; line-height: 20px; }

/* ribbon */
.ribbonwrap { height: 82px; background: #eeeeee; padding: 0 3px 0 7px; }
.ribbon { height: 82px; display: flex; border: 1px solid #6e6e6e; border-radius: 2px; padding-top: 3px; font-size: 10.6px; }
.rgroup { height: 75px; border-right: 1px solid #c4c4c4; display: flex; }
.g1 { width: 197px; padding-left: 3px; }
.g2 { width: 50px; }
.g3 { width: 86px; flex-direction: column; padding-left: 7px; gap: 4px; }
.g4 { width: 74px; }
.g5 { width: 67px; }
.g6 { width: 70px; border-right: 0; }
.rbtn { flex: 1 1 0; display: flex; flex-direction: column; align-items: center; padding-top: 6px; }
.ricon { width: 30px; height: 30px; margin-bottom: 5px; }
.ricon-print { margin-top: -2px; margin-bottom: 7px; }
.rlabel { height: 14px; line-height: 14px; white-space: nowrap; }
.chev { width: 8px; height: 5px; }
.chev-b { margin-top: 6px; }
.rrow { height: 22px; display: flex; align-items: center; }
.smicon { width: 17px; height: 15px; }
.rowtext { margin-left: 3.5px; width: 42px; }

/* main work area */
.work { flex: 1; min-height: 0; display: grid; grid-template-columns: 25px 124px 1fr; grid-template-rows: 32px 1fr; background: #f0f0f0; }
.sidetabs { grid-column: 1; grid-row: 1 / 3; padding-top: 4px; display: flex; flex-direction: column; gap: 14px; }
.stab { width: 22px; display: flex; flex-direction: column-reverse; align-items: center; justify-content: flex-start; gap: 6px; padding-bottom: 3px; border: 1px solid #c9c9c9; border-left: 0; border-radius: 0 4px 4px 0; background: #f4f4f4; font-size: 10.3px; }
.stab1 { height: 129px; }
.stab2 { height: 112px; }
.stab3 { height: 82px; }
.stab4 { height: 120px; }
.stabicon { width: 17px; height: 15px; }
.stabtext { writing-mode: vertical-rl; transform: rotate(180deg); white-space: nowrap; color: #000; }

.crumbbar { grid-column: 2 / 4; grid-row: 1; display: flex; align-items: flex-start; padding: 5px 20px 0 6px; }
.crumb { position: relative; width: 148px; height: 22px; padding-left: 8px; line-height: 24px; }
.crumbshape { position: absolute; left: 0; top: 0; width: 100%; height: 100%; }
.crumbtext { position: relative; font-size: 13.6px; color: #7f7f7f; white-space: nowrap; }
.crumbtools { margin-left: auto; display: flex; align-items: flex-start; gap: 9px; }
.announce { width: 29px; height: 20px; }
.layouticon { width: 20px; height: 19px; margin-top: 3px; }
.badge { font: bold 8px "Liberation Sans", sans-serif; fill: #fff; text-anchor: middle; }

/* palette */
.palette { grid-column: 2; grid-row: 2; display: flex; flex-direction: column; min-height: 0; margin-top: 1px; font-size: 10.6px; background: #f0f0f0; }
.cursorrow { position: relative; height: 21px; display: flex; align-items: center; gap: 5px; padding-left: 5px; margin-right: 1px; background: #7f7f7f; border: 1px solid #79aee0; color: #ececec; }
.cursorrow::after { content: ""; position: absolute; right: 0; bottom: 0; border-style: solid; border-width: 0 0 8px 8px; border-color: transparent transparent #1d1d1d transparent; }
.arrowrow { height: 17px; display: flex; justify-content: center; padding-top: 4px; }
.arrow-up { width: 0; height: 0; border-style: solid; border-width: 0 4.5px 7px; border-color: transparent transparent #9c9c9c; }
.tools { list-style: none; margin: 0; padding: 0; flex: 1; min-height: 0; overflow: hidden; }
.tool { position: relative; height: 24px; display: flex; align-items: center; gap: 5px; padding-left: 5px; white-space: nowrap; }
.ti { width: 18px; height: 18px; }
.more::after { content: ""; position: absolute; right: 2px; bottom: 2px; border-style: solid; border-width: 0 0 7px 7px; border-color: transparent transparent #333 transparent; }
.palsep { height: 10px; padding-top: 4px; margin: 0 6px; }
.palsep::before { content: ""; display: block; height: 2px; background: #cbcbcb; }
.arrowdown { height: 14px; display: flex; justify-content: center; padding-top: 4px; }
.arrow-down { width: 0; height: 0; border-style: solid; border-width: 7px 4.5px 0; border-color: #555 transparent transparent; }
.gt { font: 6.5px "Liberation Sans", sans-serif; fill: #222; text-anchor: middle; }
.gw { font: bold 6.5px "Liberation Sans", sans-serif; fill: #dfeefc; text-anchor: middle; }
.gk { fill: #000; font-size: 8px; }
.gc { font: bold 9px "Liberation Sans", sans-serif; fill: #222; text-anchor: middle; }

/* canvas */
.canvas { grid-column: 3; grid-row: 2; position: relative; margin-right: 1px; background: #fff; border: 1px solid #8a8a96; min-height: 0; }
.diagram { width: 100%; height: 100%; }
.uc { fill: #78cdf5; stroke: #1c1c1c; stroke-width: 1; }
.solid { fill: none; stroke: #222; stroke-width: 0.9; }
.dark { stroke: #333; stroke-width: 1; }
.dep { fill: none; stroke: #333; stroke-width: 0.9; stroke-dasharray: 4 3; }
.t { font: 9.5px "Liberation Sans", sans-serif; letter-spacing: -0.4px; fill: #101820; text-anchor: middle; }
.b { font-weight: bold; fill: #000; }
.lbl { font: 9.5px "Liberation Sans", sans-serif; letter-spacing: -0.4px; fill: #2a2a2a; text-anchor: middle; }
.sash { position: absolute; right: 0; top: 412px; width: 12px; height: 27px; background: #e4e4e4 linear-gradient(90deg, transparent 3px, #8f8f8f 3px, #8f8f8f 4px, transparent 4px, transparent 5px, #8f8f8f 5px, #8f8f8f 6px, transparent 6px, transparent 7px, #8f8f8f 7px, #8f8f8f 8px, transparent 8px) no-repeat center / 100% 21px; }

/* status bar */
.statusbar { height: 24px; display: flex; justify-content: flex-end; align-items: center; gap: 17px; padding-right: 20px; background: linear-gradient(#fbfbfb, #eeeeee); }
.mailicon { width: 18px; height: 12px; margin-top: 4px; }
.docicon { width: 15px; height: 17px; }

/* taskbar */
.taskbar { height: 40px; margin-top: 2px; display: flex; background: #008180; color: #fff; }
.tbtn { width: 48px; display: flex; align-items: center; justify-content: center; flex: none; }
.tbtn > svg { width: 16px; height: 16px; }
.tbtn-gap { margin-right: 3px; }
.tapp { margin-right: 1px; }
.tbtn > .t24 { width: 24px; height: 24px; }
.tbtn > .t22 { width: 22px; height: 18px; }
.tactive { background: #339a99; border-bottom: 2px solid #76b9ed; }
.tray { margin-left: auto; display: flex; align-items: center; }
.tr-chev { width: 12px; height: 7px; margin-right: 10px; }
.tr-net { width: 16px; height: 13px; margin-right: 8px; }
.tr-snd { width: 14px; height: 12px; margin-right: 12px; }
.tr-lang { width: 23px; font: 11.5px "Open Sans", sans-serif; white-space: nowrap; margin-right: 13px; }
.clock { width: 54px; display: flex; flex-direction: column; align-items: center; font: 11.5px/18px "Open Sans", sans-serif; white-space: nowrap; }
.sliver { width: 1px; height: 40px; margin: 0 4px 0 6px; background: #5fb0ae; }
```
